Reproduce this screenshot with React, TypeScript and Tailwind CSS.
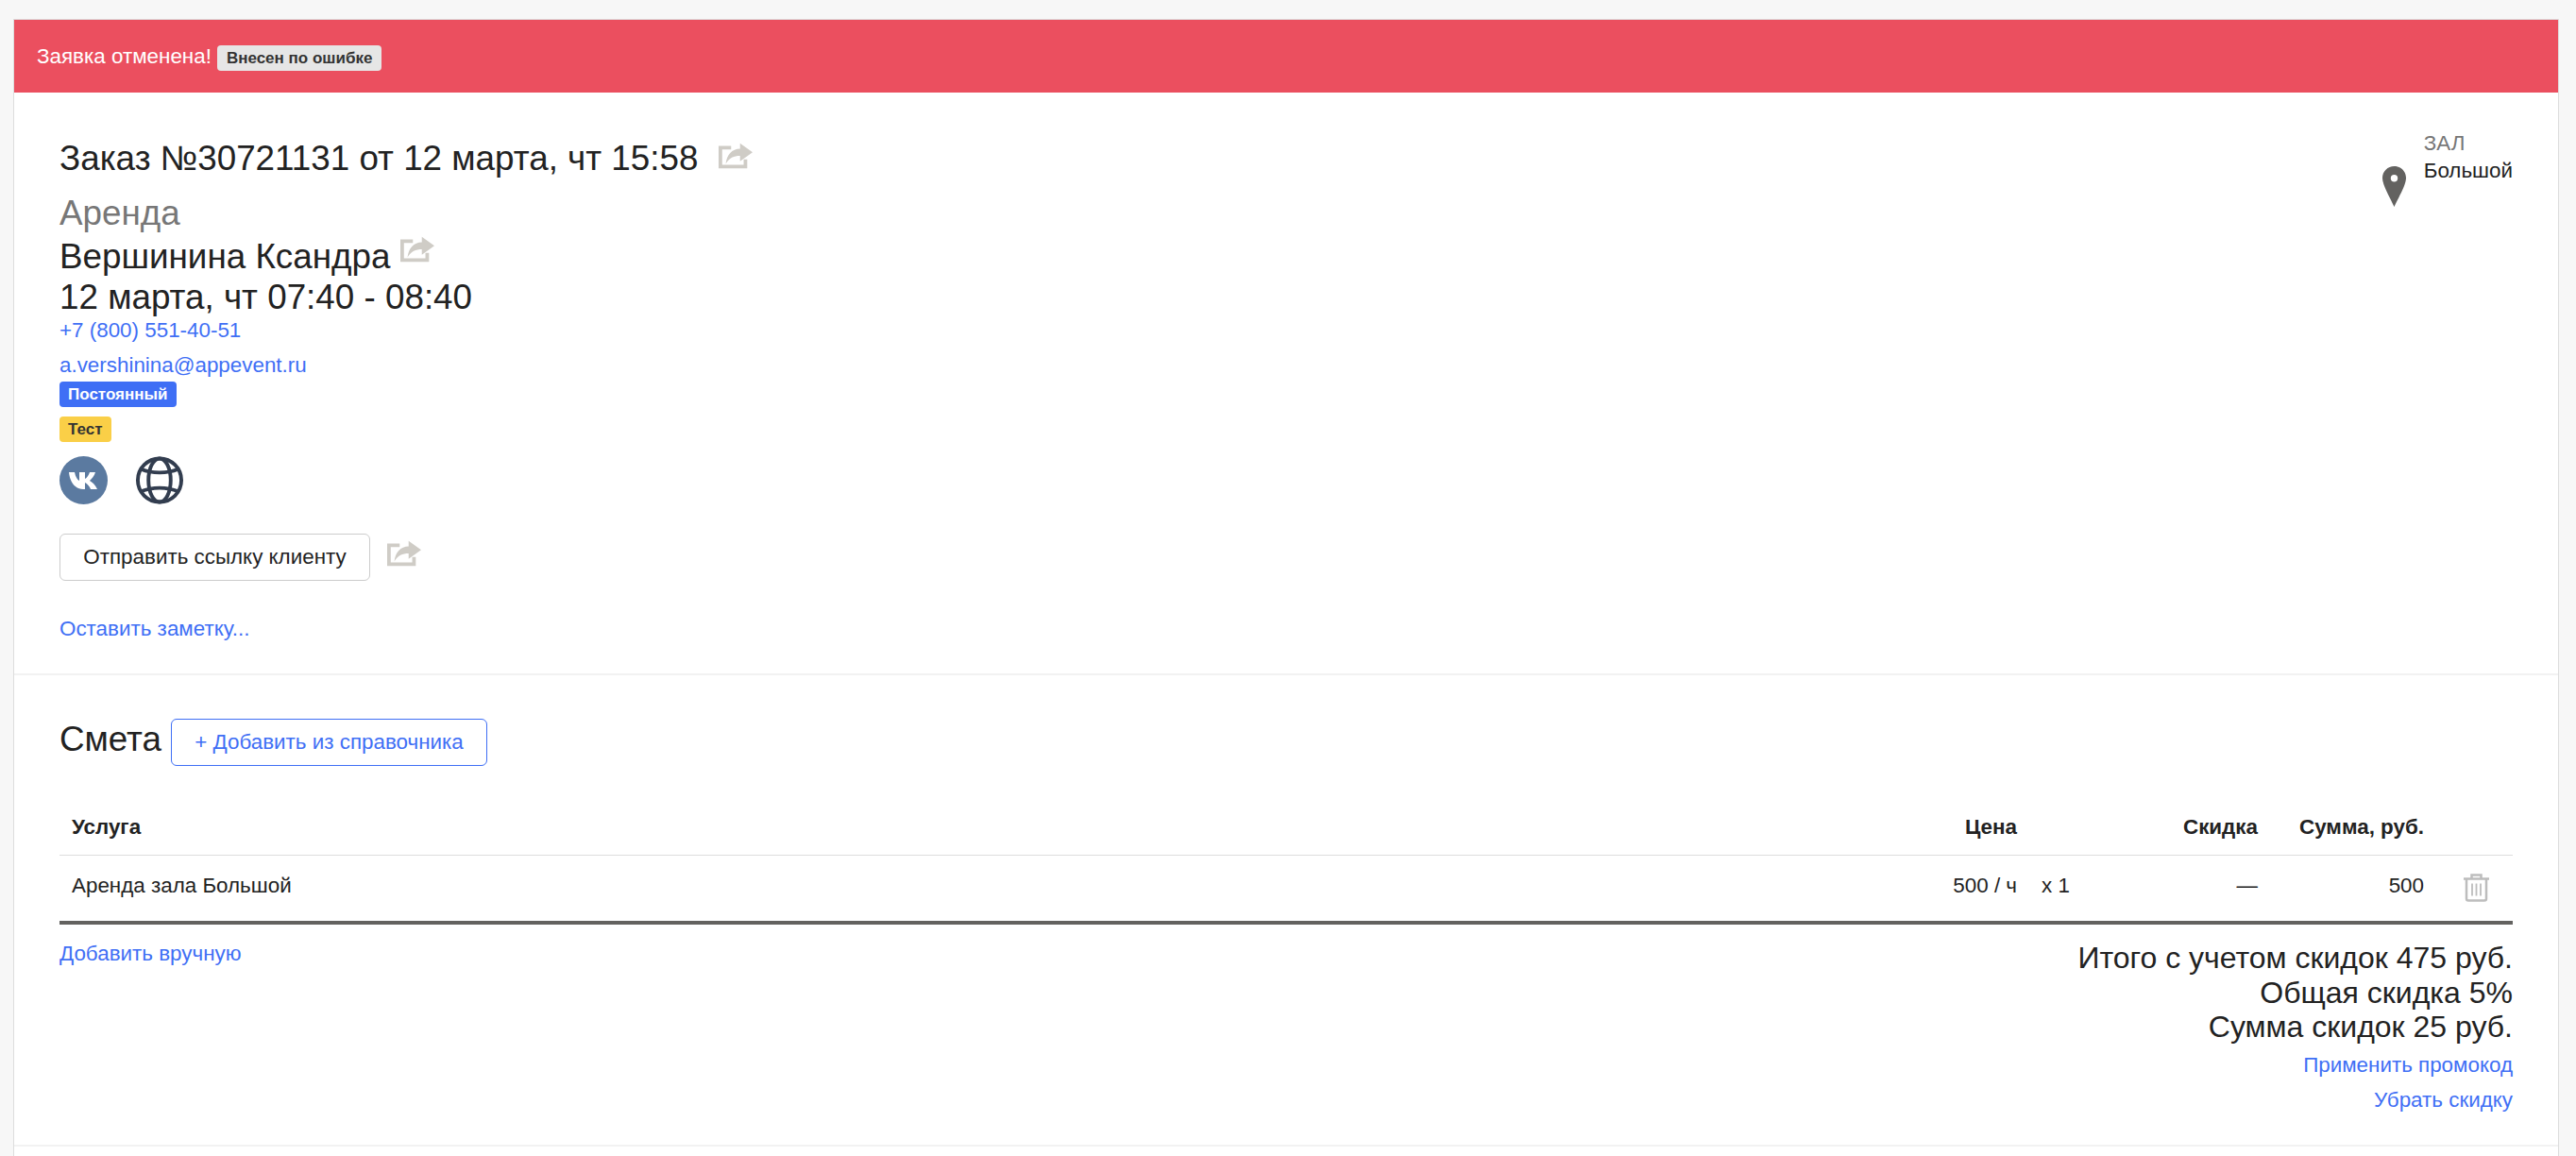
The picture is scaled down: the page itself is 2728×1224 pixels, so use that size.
import React from 'react';

const ShareIcon = ({ className }: { className?: string }) => (
  <svg viewBox="0 0 38 28" className={className}>
    <path d="M14 5H2v21h28v-8" fill="none" stroke="#cfccc6" strokeWidth="4" />
    <path d="M24 0l14 10-14 10v-6c-7 0-12 2-16 9 1-10 7-17 16-17z" fill="#cfccc6" />
  </svg>
);

const VkIcon = () => (
  <svg viewBox="0 0 32 19" className="w-[32px] h-[19px]">
    <path
      d="M0 1h6c1 5 3 8 5 9V1h6v7c2-1 4-4 5-7h6c-1 4-4 7-6 9 2 1 6 4 8 9h-7c-1-3-4-6-6-7v7h-2C7 19 1 12 0 1z"
      fill="#ffffff"
    />
  </svg>
);

const GlobeIcon = () => (
  <svg viewBox="0 0 52 52" className="w-[52px] h-[51px]" fill="none" stroke="#323d4f" strokeWidth="4">
    <circle cx="26" cy="26" r="23.5" />
    <ellipse cx="26" cy="26" rx="12" ry="23.5" />
    <path d="M6 14c12 5 28 5 40 0M6 38c12-5 28-5 40 0" />
  </svg>
);

const PinIcon = () => (
  <svg viewBox="0 0 25 43" className="w-[25px] h-[43px]">
    <path
      fillRule="evenodd"
      d="M12.5 0C5.6 0 0 5.5 0 12.5 0 20 8 33 12.5 43 17 33 25 20 25 12.5 25 5.5 19.4 0 12.5 0zm0 9a3.7 3.7 0 1 1 0 7.400a3.700 3.700 0 0 1 0-7.400z"
      fill="#636260"
    />
  </svg>
);

const TrashIcon = () => (
  <svg viewBox="0 0 27 30" className="w-[27px] h-[30px]" fill="none" stroke="#bdbdbd" strokeWidth="2.500">
    <path d="M0 5.500h27M8.500 5V1.500h10V5" />
    <path d="M3 6v20.500a2 2 0 0 0 2 2h17a2 2 0 0 0 2-2V6" />
    <path d="M9 10.500v13M13.500 10.500v13M18 10.500v13" strokeWidth="1.800" />
  </svg>
);

const Link = ({ children, className = '' }: { children: React.ReactNode; className?: string }) => (
  <a className={`text-[#3f6ff5] text-[22.4px] leading-[30px] ${className}`}>{children}</a>
);

export default function App() {
  return (
    <div className="h-[1224px] overflow-hidden bg-[#f7f7f7] pt-[20px] px-[14px] pr-[18px] font-['Liberation_Sans',Arial,sans-serif] text-[#222222]">
      <div className="bg-white border border-[#dddddd] border-b-0 h-[1300px]">
        {/* Cancel banner */}
        <div className="bg-[#eb4f5f] h-[77px] pl-[24px] flex items-center text-white text-[22.4px]">
          <span>Заявка отменена!</span>
          <span className="ml-[6px] mt-[4px] h-[27px] px-[10px] flex items-center rounded-[4px] bg-[#e6e6e6] text-[#333333] text-[17px] font-bold">
            Внесен по ошибке
          </span>
        </div>

        {/* Order info */}
        <div className="flex justify-between pl-[48px] pr-[48px] pt-[48px] pb-[32px] border-b-2 border-[#f2f2f2]">
          <div className="flex flex-col items-start">
            <div className="flex items-center h-[44px] text-[36.8px]">
              <span>Заказ №30721131 от 12 марта, чт 15:58</span>
              <ShareIcon className="ml-[22px] mb-[6px] w-[36px] h-[28px]" />
            </div>
            <div className="mt-[14px] h-[44px] leading-[44px] text-[36.8px] text-[#777777]">Аренда</div>
            <div className="mt-[2px] flex items-center h-[44px] text-[36.8px]">
              <span>Вершинина Ксандра</span>
              <ShareIcon className="ml-[11px] mb-[16px] w-[36px] h-[28px]" />
            </div>
            <div className="h-[41px] leading-[41px] text-[36.8px]">12 марта, чт 07:40 - 08:40</div>
            <Link className="mt-[2px] h-[26px] !leading-[26px]">+7 (800) 551-40-51</Link>
            <Link className="mt-[11px] h-[26px] !leading-[26px]">a.vershinina@appevent.ru</Link>
            <span className="mt-[4px] h-[27px] px-[9px] flex items-center rounded-[4px] bg-[#3f6ff5] text-white text-[17px] font-bold">
              Постоянный
            </span>
            <span className="mt-[10px] h-[27px] px-[9px] flex items-center rounded-[4px] bg-[#facf47] text-[#333333] text-[17px] font-bold">
              Тест
            </span>
            <div className="mt-[15px] flex items-center gap-[29px]">
              <div className="w-[51px] h-[51px] rounded-full bg-[#5b7aa0] flex items-center justify-center">
                <VkIcon />
              </div>
              <GlobeIcon />
            </div>
            <div className="mt-[31px] flex items-center">
              <button className="h-[50px] w-[329px] rounded-[6px] border-[1.5px] border-[#cccccc] bg-white text-[22.4px] text-[#222222]">
                Отправить ссылку клиенту
              </button>
              <ShareIcon className="ml-[18px] mb-[8px] w-[36px] h-[28px]" />
            </div>
            <Link className="mt-[36px]">Оставить заметку...</Link>
          </div>

          {/* Hall */}
          <div className="flex items-start self-start mt-[-9px]">
            <div className="mt-[39px] mr-[19px]">
              <PinIcon />
            </div>
            <div className="text-[22.4px] leading-[29px]">
              <div className="text-[#777777]">ЗАЛ</div>
              <div>Большой</div>
            </div>
          </div>
        </div>

        {/* Estimate */}
        <div className="px-[48px] pt-[46px] pb-[32px] border-b-2 border-[#f2f2f2]">
          <div className="flex items-center gap-[10px]">
            <span className="text-[36.8px] leading-[44px] mb-[6px]">Смета</span>
            <button className="h-[50px] w-[335px] rounded-[6px] border-[1.5px] border-[#3f6ff5] bg-white text-[22.4px] text-[#3f6ff5]">
              + Добавить из справочника
            </button>
          </div>

          <div className="mt-[43px] grid grid-cols-[1fr_200px_105px_150px_176px_94px] text-[22.4px] items-center">
            <div className="col-span-6 grid grid-cols-subgrid border-b-[1.5px] border-[#dddddd] h-[52px] font-bold pb-[8px] items-center">
              <div className="pl-[13px]">Услуга</div>
              <div className="text-right">Цена</div>
              <div />
              <div className="text-right">Скидка</div>
              <div className="text-right">Сумма, руб.</div>
              <div />
            </div>
            <div className="col-span-6 grid grid-cols-subgrid h-[73px] border-b-4 border-[#636260] items-center pb-[6px]">
              <div className="pl-[13px]">Аренда зала Большой</div>
              <div className="text-right">500 / ч</div>
              <div className="pl-[26px]">x 1</div>
              <div className="text-right">—</div>
              <div className="text-right">500</div>
              <div className="pl-[42px] pt-[4px]">
                <TrashIcon />
              </div>
            </div>
          </div>

          <div className="flex justify-between items-start">
            <Link className="mt-[16px]">Добавить вручную</Link>
            <div className="mt-[17px] flex flex-col items-end">
              <div className="text-[32px] leading-[36.500px]">Итого с учетом скидок 475 руб.</div>
              <div className="text-[32px] leading-[36.500px]">Общая скидка 5%</div>
              <div className="text-[32px] leading-[36.500px]">Сумма скидок 25 руб.</div>
              <Link className="mt-[7px]">Применить промокод</Link>
              <Link className="mt-[7px]">Убрать скидку</Link>
            </div>
          </div>
        </div>
      </div>
    </div>
  );
}
